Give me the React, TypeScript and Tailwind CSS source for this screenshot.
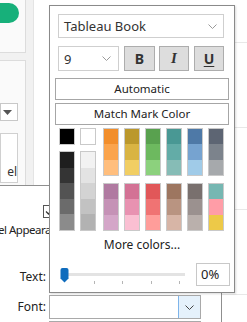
import React from "react";

const F = { fontFamily: '"Noto Sans", "Open Sans", sans-serif' };

const Chevron = ({ color = "#9a9a9a" }: { color?: string }) => (
  <svg width="9" height="5" viewBox="0 0 9 5">
    <path d="M0.5 0.5 L4.5 4.5 L8.5 0.5" fill="none" stroke={color} strokeWidth="1" />
  </svg>
);

const blackStack = ["bg-[#1e1e1e]", "bg-[#343434]", "bg-[#535353]", "bg-[#6b6b6b]", "bg-[#8b8b8b]"];
const whiteStack = ["bg-[#f2f2f2]", "bg-[#e3e3e3]", "bg-[#d3d3d3]", "bg-[#c2c2c2]", "bg-[#b2b2b2]"];

const topCols = [
  ["bg-[#f28e2b]", "bg-[#fba44c]", "bg-[#ffbe7d]"],
  ["bg-[#bb982c]", "bg-[#d9b443]", "bg-[#f1ce63]"],
  ["bg-[#59a14f]", "bg-[#6db95f]", "bg-[#8cd17d]"],
  ["bg-[#499894]", "bg-[#63aca7]", "bg-[#86bcb6]"],
  ["bg-[#4e79a7]", "bg-[#76a3d0]", "bg-[#a0cbe8]"],
  ["bg-[#5d6573]", "bg-[#7c838c]", "bg-[#a6a9ac]"],
];
const bottomCols = [
  ["bg-[#b07aa1]", "bg-[#c592b6]", "bg-[#d4a6c8]"],
  ["bg-[#d37295]", "bg-[#e892b1]", "bg-[#fabfd2]"],
  ["bg-[#e15759]", "bg-[#f07373]", "bg-[#ff9d9a]"],
  ["bg-[#9d7660]", "bg-[#b99481]", "bg-[#d7b5a6]"],
  ["bg-[#79706e]", "bg-[#9b918f]", "bg-[#bab0ac]"],
  ["bg-[#76b7b2]", "bg-[#ff9da7]", "bg-[#edc948]"],
];

const Stack = ({ colors, h }: { colors: string[]; h: string }) => (
  <div className={`flex flex-col w-[16px] border border-[#c9c9c9] ${h}`}>
    {colors.map((c, i) => (
      <div key={i} className={`flex-1 ${c}`} />
    ))}
  </div>
);

export default function App() {
  return (
    <div className="relative w-[247px] h-[322px] overflow-hidden bg-white text-[#222]" style={F}>
      {/* page behind */}
      <div className="flex h-full">
        <div className="flex w-[34px] h-[186px] bg-[#f1f1f1] border-r border-[#e4e4e4]">
          <div className="flex flex-col w-[26px]">
            <div className="h-[53px] bg-[#fafafa] border-r border-b border-[#dcdcdc] pt-[3px]">
              <div className="ml-[-20px] w-[39px] h-[20px] rounded-full bg-[#17b07a]" />
            </div>
            <div className="mt-[7px] flex-1 bg-[#fafafa] border-t border-r border-[#dcdcdc] pt-[42px]">
              <div className="w-[18px] h-[18px] bg-white border border-[#c8c8c8] flex items-center justify-center">
                <svg width="9" height="5" viewBox="0 0 9 5" className="ml-[-3px]">
                  <path d="M0 0 L9 0 L4.5 5 Z" fill="#555" />
                </svg>
              </div>
              <div className="mt-[12px] w-[18px] h-[50px] bg-white border border-[#d0d0d0] flex items-end justify-end overflow-hidden">
                <span className="text-[12px] leading-[16px] mb-[2px] text-[#333]">el</span>
              </div>
            </div>
          </div>
        </div>
        <div className="flex-1" />
        <div className="flex flex-col w-[26px]">
          <div className="h-[43px] border-b border-[#e8e8e8]" />
          <div className="h-[85px] border-b border-[#e8e8e8]" />
          <div className="h-[82px] border-b border-[#e8e8e8]" />
          <div className="h-[85px] border-b border-[#e8e8e8]" />
        </div>
      </div>

      {/* dialog behind popup */}
      <div className="absolute left-[-28px] top-[185px] w-[250px] h-[160px] bg-white border-t border-r border-[#8f8f8f] flex flex-col">
        <div className="mt-[19px] ml-[71px] w-[13px] h-[13px] border border-[#555] bg-white flex items-center justify-center">
          <svg width="9" height="9" viewBox="0 0 9 9">
            <path d="M1 4.5 L3.5 7 L8 1.5" fill="none" stroke="#333" strokeWidth="1.2" />
          </svg>
        </div>
        <div className="mt-[4px] ml-[8px] text-[11.5px] leading-[16px] tracking-[-0.5px] whitespace-nowrap">Label Appearance</div>
        <div className="mt-[31px] flex items-center h-[16px]">
          <div className="w-[74px] text-right text-[12px] leading-[16px]">Text:</div>
        </div>
        <div className="mt-[10px] flex items-center">
          <div className="w-[74px] text-right text-[12px] leading-[16px]">Font:</div>
          <div className="ml-[3px] w-[152px] h-[24px] border border-[#a9a9a9] flex justify-end bg-white">
            <div className="w-[22px] h-full bg-[#e5f1fb] border-l border-[#7eb4ea] flex items-center justify-center">
              <Chevron color="#444" />
            </div>
          </div>
        </div>
        <div className="mt-[2px] ml-[77px] w-[152px] h-[24px] border-t border-l border-[#a9a9a9]" />
      </div>

      {/* popup */}
      <div className="absolute left-[49px] top-[5px] w-[186px] h-[288px] bg-white border border-[#8a8a8a] shadow-[1px_1px_2px_rgba(0,0,0,0.15)] flex flex-col">
        <div className="mt-[8px] ml-[8px] w-[166px] h-[24px] border border-[#cfcfcf] flex items-center justify-between pl-[5px] pr-[6px]">
          <span className="text-[13px] leading-[16px] text-[#333]">Tableau Book</span>
          <Chevron />
        </div>
        <div className="mt-[8px] ml-[8px] flex h-[25px]">
          <div className="w-[61px] h-full border border-[#cfcfcf] flex items-center justify-between pl-[5px] pr-[7px]">
            <span className="text-[13px] leading-[16px] text-[#333]">9</span>
            <Chevron />
          </div>
          <div className="ml-[5px] w-[31px] h-full bg-[#dddddd] border border-[#adadad] flex items-center justify-center">
            <span className="text-[14px] font-bold text-[#333]">B</span>
          </div>
          <div className="ml-[4px] w-[30px] h-full bg-[#dddddd] border border-[#adadad] flex items-center justify-center">
            <span className="text-[15px] font-bold italic text-[#333]" style={{ fontFamily: '"Liberation Serif", serif' }}>I</span>
          </div>
          <div className="ml-[5px] w-[30px] h-full bg-[#dddddd] border border-[#adadad] flex items-center justify-center">
            <span className="text-[14px] font-bold underline underline-offset-2 text-[#333]">U</span>
          </div>
        </div>
        <div className="mt-[7px] mx-[5px] h-[22px] border border-[#a6a6a6] flex items-center justify-center text-[11.5px]">Automatic</div>
        <div className="mt-[3px] mx-[5px] h-[22px] border border-[#a6a6a6] flex items-center justify-center text-[11.5px]">Match Mark Color</div>

        <div className="mt-[3px] ml-[9px] flex items-start">
          <div className="flex flex-col">
            <div className="w-[16px] h-[17px] bg-black border border-[#c9c9c9]" />
            <div className="mt-[6px]"><Stack colors={blackStack} h="h-[80px]" /></div>
          </div>
          <div className="ml-[5px] flex flex-col">
            <div className="w-[16px] h-[17px] bg-white border border-[#c9c9c9]" />
            <div className="mt-[6px]"><Stack colors={whiteStack} h="h-[80px]" /></div>
          </div>
          <div className="ml-[7px] flex gap-[5px]">
            {topCols.map((t, i) => (
              <div key={i} className="flex flex-col gap-[7px]">
                <Stack colors={t} h="h-[48px]" />
                <Stack colors={bottomCols[i]} h="h-[48px]" />
              </div>
            ))}
          </div>
        </div>

        <div className="mt-[6px] text-center text-[12px] leading-[16px]">More colors...</div>

        <div className="mt-[10px] ml-[10px] flex items-start">
          <svg width="127" height="23" viewBox="0 0 127 23">
            <rect x="3" y="10" width="122" height="3" fill="#e3e3e3" />
            <rect x="34" y="18" width="1" height="3" fill="#b5b5b5" />
            <rect x="62" y="18" width="1" height="3" fill="#b5b5b5" />
            <rect x="91" y="18" width="1" height="3" fill="#b5b5b5" />
            <rect x="119" y="18" width="1" height="3" fill="#b5b5b5" />
            <path d="M0.5 7 Q0.5 5 2.5 5 L6.5 5 Q8.5 5 8.5 7 L8.5 15.5 L4.5 19.5 L0.5 15.5 Z" fill="#0f6cbd" />
          </svg>
          <div className="ml-[9px] w-[34px] h-[23px] border border-[#c8c8c8] flex items-center pl-[4px] text-[13px]">0%</div>
        </div>
      </div>
    </div>
  );
}
